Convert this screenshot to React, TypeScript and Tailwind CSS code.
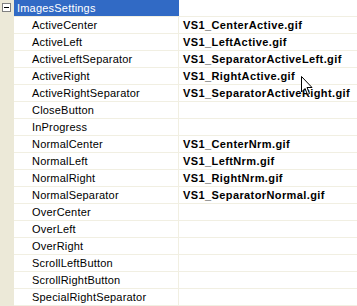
const rows: [string, string][] = [
  ['ActiveCenter', 'VS1_CenterActive.gif'],
  ['ActiveLeft', 'VS1_LeftActive.gif'],
  ['ActiveLeftSeparator', 'VS1_SeparatorActiveLeft.gif'],
  ['ActiveRight', 'VS1_RightActive.gif'],
  ['ActiveRightSeparator', 'VS1_SeparatorActiveRight.gif'],
  ['CloseButton', ''],
  ['InProgress', ''],
  ['NormalCenter', 'VS1_CenterNrm.gif'],
  ['NormalLeft', 'VS1_LeftNrm.gif'],
  ['NormalRight', 'VS1_RightNrm.gif'],
  ['NormalSeparator', 'VS1_SeparatorNormal.gif'],
  ['OverCenter', ''],
  ['OverLeft', ''],
  ['OverRight', ''],
  ['ScrollLeftButton', ''],
  ['ScrollRightButton', ''],
  ['SpecialRightSeparator', ''],
]

export default function App() {
  return (
    <div
      className="relative w-[357px] h-[306px] overflow-hidden bg-white flex text-[11px] text-black"
      style={{ fontFamily: '"Liberation Sans", Arial, sans-serif' }}
    >
      {/* gutter */}
      <div className="w-[14px] shrink-0 bg-[#ece9d8] flex flex-col">
        <div className="h-[17px] flex items-start pt-[3px] pl-[2px]">
          <div className="w-[9px] h-[9px] border border-[#808080] bg-white flex items-center justify-center">
            <div className="w-[5px] h-px bg-black" />
          </div>
        </div>
      </div>

      <div className="flex-1 flex flex-col">
        {/* category header */}
        <div className="h-[17px] flex border-b border-[#f1efe2]">
          <div className="w-[165px] h-[16px] bg-[#316ac5] text-white pl-[3px] leading-[16px] tracking-[0.2px] shrink-0">
            ImagesSettings
          </div>
          <div className="flex-1" />
        </div>

        {rows.map(([name, value]) => (
          <div key={name} className="h-[17px] flex border-b border-[#f1efe2]">
            <div className="w-[165px] shrink-0 pl-[18px] leading-[16px] tracking-[0.2px] border-r border-[#f1efe2] whitespace-nowrap">
              {name}
            </div>
            <div className="flex-1 pl-[4px] leading-[16px] font-bold tracking-[0.4px] whitespace-nowrap overflow-hidden">
              {value}
            </div>
          </div>
        ))}
      </div>

      {/* mouse cursor */}
      <svg className="absolute left-[301px] top-[76px]" width="12" height="20" viewBox="0 0 12 20">
        <path d="M0.5 0.5 L0.5 16 L4 12.5 L6.5 18.5 L8.5 17.5 L6 11.5 L11 11.5 Z" fill="white" stroke="black" strokeWidth="1" />
      </svg>
    </div>
  )
}
